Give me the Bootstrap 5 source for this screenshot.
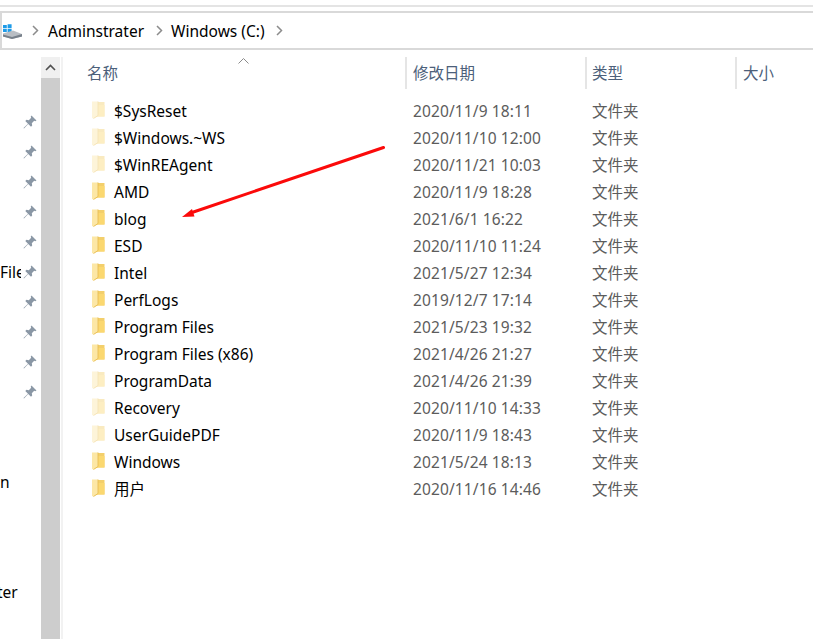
<!DOCTYPE html>
<html lang="zh-CN">
<head>
<meta charset="UTF-8">
<meta name="viewport" content="width=device-width, initial-scale=1.0">
<title>Windows (C:)</title>
<link href="https://cdn.jsdelivr.net/npm/bootstrap@5.3.0/dist/css/bootstrap.min.css" rel="stylesheet">
<style>
    html, body { height: 100%; }
    body {
        background: #fff;
        color: #000;
        font-family: "Noto Sans", "Noto Sans CJK SC", sans-serif;
        font-size: 15.5px;
        line-height: 20px;
        overflow: hidden;
    }
    .explorer { width: 813px; height: 639px; overflow: hidden; }

    .top-rule { height: 11px; padding-top: 5px; }
    .top-rule div { height: 2px; background: #e4e4e4; }
    .address-bar {
        height: 39px;
        border: 1px solid #d9d9d9;
        border-width: 2px 0 2px 2px;
        padding-left: 1px;
    }
    .drive-icon { width: 20px; height: 15px; margin-right: 9px; margin-top: 1px; flex: none; }
    .crumb-arrow { width: 7px; height: 11px; flex: none; }
    .crumb-first { margin-right: 9px; }
    .crumb-a { margin: 0 8px 0 12px; }
    .crumb-c { margin-left: 11px; }

    .side-pane { width: 41px; padding-top: 57px; flex: none; }
    .side-row { height: 30px; }
    .side-label { width: 21px; overflow: hidden; white-space: nowrap; }
    .side-cut { margin-left: -3px; }
    .pin-icon { width: 14px; height: 14px; flex: none; margin-left: auto; }
    .gap-one { margin-top: 60px; }
    .gap-two { margin-top: 80px; }

    .side-scroll { width: 19px; margin-top: 7px; background: #cdcdcd; }
    .scroll-up { height: 21px; background: #f0f0f0; }
    .scroll-up svg { width: 11px; height: 7px; }
    .pane-line { width: 2px; margin-left: 1px; background: #f2f2f2; margin-top: 7px; }

    .file-pane { padding-top: 7px; }
    .head-row { height: 32px; color: #4c607a; }
    .col-name { width: 342px; padding-left: 24px; }
    .col-date { width: 180px; padding-left: 6px; border-left: 2px solid #e5e5e5; }
    .col-type { width: 150px; padding-left: 5px; border-left: 2px solid #e5e5e5; }
    .col-size { flex: 1; padding-left: 6px; border-left: 2px solid #e5e5e5; }
    .sort-caret { top: 1px; left: 175px; width: 11px; height: 6px; }

    .file-list { margin: 8px 0 0; padding: 0; list-style: none; }
    .file-row { height: 27px; }
    .file-row .f-name { width: 342px; padding-left: 28px; }
    .file-row .f-date { width: 180px; padding-left: 8px; color: #5c5c5c; letter-spacing: .12px; }
    .file-row .f-type { padding-left: 7px; color: #5c5c5c; }
    .folder-icon { width: 14px; height: 18px; margin-right: 9px; margin-top: -2px; flex: none; }
    .is-hidden .folder-icon { opacity: .42; }
    .red-arrow { left: 0; top: 0; width: 813px; height: 639px; pointer-events: none; }
</style>
</head>
<body>
<svg width="0" height="0" class="position-absolute">
    <defs>
        <symbol id="folder" viewBox="0 0 14 18">
            <path d="M6 1h7.500v14.500H6z" fill="#f3cf6b"/>
            <path d="M1 .5h6v15L2.500 17.500 1 17z" fill="#fce7a6"/>
            <path d="M7 4h6.500v11.500H4.500L7 14.500z" fill="#fbd870"/>
            <path d="M7 .5v14L2.500 17.500" fill="none" stroke="#e8bd55" stroke-width=".9"/>
        </symbol>
        <symbol id="pin" viewBox="0 0 14 14">
            <path d="M8.500 .5l5 5-1.200.8-1.100-.5-2.400 2.400.4 2.300-1.200 1.200-2.800-2.800L1 13.500l-.5-.5L5 8.700 2.300 6l1.200-1.200 2.300.4 2.400-2.400-.5-1.100z" fill="#8a97a5"/>
        </symbol>
        <symbol id="chev" viewBox="0 0 7 11">
            <path d="M1 1l4.500 4.500L1 10" fill="none" stroke="#8c8c8c" stroke-width="1.500"/>
        </symbol>
    </defs>
</svg>

<div class="explorer position-relative d-flex flex-column">
    <div class="top-rule"><div></div></div>

    <div class="address-bar d-flex align-items-center">
        <svg class="drive-icon" viewBox="0 0 20 15">
            <path d="M0 1h3.800v3.200H0zM4.600 .3h4v3.900h-4zM0 5h3.800v3H0zM4.600 5h4v3.500h-4z" fill="#1e9be8"/>
            <path d="M0 9.500l10-3 9 3.500v2.500L9 15l-9-2.500z" fill="#b9bec4"/>
            <path d="M0 10.500L9 13l10-3v2.500L9 15l-9-2.500z" fill="#77808a"/>
        </svg>
        <svg class="crumb-arrow crumb-first"><use href="#chev"/></svg>
        <span>Adminstrater</span>
        <svg class="crumb-arrow crumb-a"><use href="#chev"/></svg>
        <span>Windows (C:)</span>
        <svg class="crumb-arrow crumb-c"><use href="#chev"/></svg>
    </div>

    <div class="d-flex flex-grow-1">
        <div class="side-pane">
            <div id="sideRows"></div>
            <div class="side-row gap-one d-flex align-items-center">n</div>
            <div class="side-row gap-two d-flex align-items-center"><span class="side-cut">ter</span></div>
        </div>
        <div class="side-scroll">
            <div class="scroll-up d-flex align-items-center justify-content-center">
                <svg viewBox="0 0 11 7"><path d="M1 6l4.500-4.500L10 6" fill="none" stroke="#505050" stroke-width="1.600"/></svg>
            </div>
        </div>
        <div class="pane-line"></div>

        <div class="file-pane flex-grow-1">
            <div class="head-row position-relative d-flex">
                <div class="col-name d-flex align-items-center">名称</div>
                <svg class="sort-caret position-absolute" viewBox="0 0 11 6"><path d="M.5 5.500l5-5 5 5" fill="none" stroke="#8a8a8a"/></svg>
                <div class="col-date d-flex align-items-center">修改日期</div>
                <div class="col-type d-flex align-items-center">类型</div>
                <div class="col-size d-flex align-items-center">大小</div>
            </div>
            <ul class="file-list" id="fileList"></ul>
        </div>
    </div>

    <svg class="red-arrow position-absolute" viewBox="0 0 813 639">
        <path d="M383.500 147.500L192 212.500" stroke="#fb0a0a" stroke-width="3" stroke-linecap="round"/>
        <path d="M182 217l10-8 2.500 7.500z" fill="#fb0a0a"/>
    </svg>
</div>

<script src="https://cdn.jsdelivr.net/npm/bootstrap@5.3.0/dist/js/bootstrap.bundle.min.js"></script>
<script>
    const files = [
        ['$SysReset', '2020/11/9 18:11', true],
        ['$Windows.~WS', '2020/11/10 12:00', true],
        ['$WinREAgent', '2020/11/21 10:03', true],
        ['AMD', '2020/11/9 18:28'],
        ['blog', '2021/6/1 16:22'],
        ['ESD', '2020/11/10 11:24'],
        ['Intel', '2021/5/27 12:34'],
        ['PerfLogs', '2019/12/7 17:14'],
        ['Program Files', '2021/5/23 19:32'],
        ['Program Files (x86)', '2021/4/26 21:27'],
        ['ProgramData', '2021/4/26 21:39', true],
        ['Recovery', '2020/11/10 14:33', true],
        ['UserGuidePDF', '2020/11/9 18:43', true],
        ['Windows', '2021/5/24 18:13'],
        ['用户', '2020/11/16 14:46']
    ];

    document.getElementById('fileList').innerHTML = files.map(f => `
        <li class="file-row d-flex align-items-center ${f[2] ? 'is-hidden' : ''}">
            <div class="f-name d-flex align-items-center">
                <svg class="folder-icon"><use href="#folder"/></svg><span>${f[0]}</span>
            </div>
            <div class="f-date">${f[1]}</div>
            <div class="f-type">文件夹</div>
        </li>`).join('');

    // quick access rows, only the pinned ones
    let side = '';
    for (let i = 0; i < 10; i++) {
        side += `<div class="side-row d-flex align-items-center">
            ${i === 5 ? '<div class="side-label">File</div>' : ''}
            <svg class="pin-icon me-1"><use href="#pin"/></svg>
        </div>`;
    }
    document.getElementById('sideRows').innerHTML = side;
</script>
</body>
</html>
